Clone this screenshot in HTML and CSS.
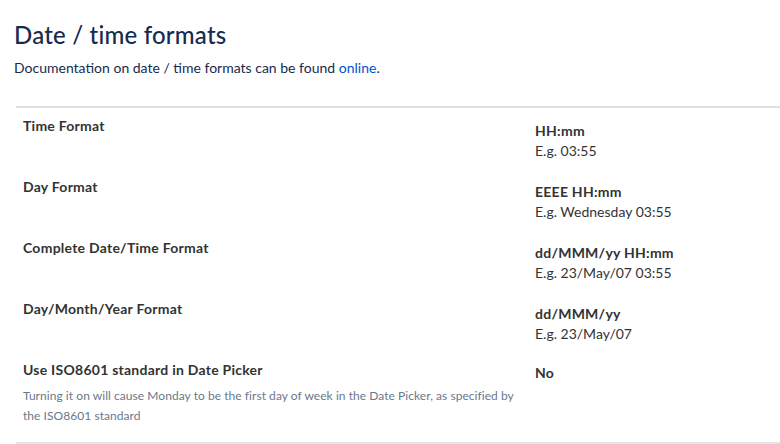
FILE: index.html
```html
<!DOCTYPE html>
<html>
<head>
<meta charset="utf-8">
<link rel="stylesheet" href="styles.css">
</head>
<body>
<div class="page">
  <h1 class="title">Date / time formats</h1>
  <p class="intro">Documentation on date / time formats can be found <a class="link" href="#">online</a>.</p>
  <div class="table">
    <div class="row">
      <div class="label-cell"><div class="label">Time Format</div></div>
      <div class="value-cell"><div class="value">HH:mm</div><div class="example">E.g. 03:55</div></div>
    </div>
    <div class="row">
      <div class="label-cell"><div class="label">Day Format</div></div>
      <div class="value-cell"><div class="value">EEEE HH:mm</div><div class="example">E.g. Wednesday 03:55</div></div>
    </div>
    <div class="row">
      <div class="label-cell"><div class="label">Complete Date/Time Format</div></div>
      <div class="value-cell"><div class="value">dd/MMM/yy HH:mm</div><div class="example">E.g. 23/May/07 03:55</div></div>
    </div>
    <div class="row">
      <div class="label-cell"><div class="label">Day/Month/Year Format</div></div>
      <div class="value-cell"><div class="value">dd/MMM/yy</div><div class="example">E.g. 23/May/07</div></div>
    </div>
    <div class="row row-last">
      <div class="label-cell">
        <div class="label">Use ISO8601 standard in Date Picker</div>
        <div class="desc">Turning it on will cause Monday to be the first day of week in the Date Picker, as specified by the ISO8601 standard</div>
      </div>
      <div class="value-cell"><div class="value">No</div></div>
    </div>
  </div>
</div>
</body>
</html>
```

FILE: styles.css
```css
html, body {
  margin: 0;
  padding: 0;
  background: #ffffff;
}
body {
  font-family: Lato, "Open Sans", sans-serif;
  font-size: 14px;
  line-height: 20px;
  color: #333333;
  overflow: hidden;
}
.page {
  padding: 19px 0 0 14px;
}
.title {
  margin: 0;
  font-size: 24px;
  line-height: 32px;
  font-weight: 500;
  color: #172b4d;
  letter-spacing: 0.2px;
}
.intro {
  margin: 7px 0 0 0;
  color: #172b4d;
}
.link {
  color: #0052cc;
  text-decoration: none;
}
.table {
  margin: 28px 0 0 2px;
  border-top: 2px solid #dfe1e6;
}
.row {
  display: flex;
}
.label-cell {
  width: 498px;
  padding: 8px 7px 7px 7px;
  flex: none;
}
.value-cell {
  padding: 13px 7px 8px 7px;
}
.label, .value {
  font-weight: 700;
  letter-spacing: 0.25px;
}
.example {
  color: #333333;
}
.desc {
  margin-top: 6px;
  font-size: 12px;
  line-height: 20px;
  color: #6b778c;
  letter-spacing: 0.05px;
}
.row-last {
  border-bottom: 2px solid #e4e4e4;
}
.row-last .label-cell {
  padding-bottom: 16px;
}
.row-last .value-cell {
  padding-top: 11px;
}
```
